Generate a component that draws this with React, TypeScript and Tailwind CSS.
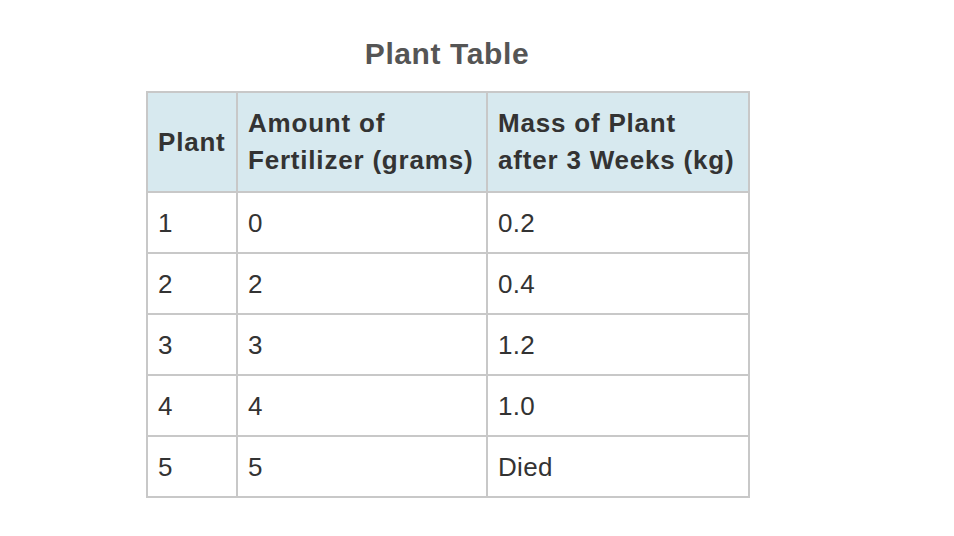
import React from "react";

const rows = [
  { plant: "1", fert: "0", mass: "0.2" },
  { plant: "2", fert: "2", mass: "0.4" },
  { plant: "3", fert: "3", mass: "1.2" },
  { plant: "4", fert: "4", mass: "1.0" },
  { plant: "5", fert: "5", mass: "Died" },
];

export default function App() {
  return (
    <div
      className="w-[954px] h-[536px] bg-white pl-[146px] pt-[37px]"
      style={{ fontFamily: '"Liberation Sans", Arial, sans-serif' }}
    >
      <div className="w-[602px] flex flex-col">
        {/* Title */}
        <h1 className="text-center text-[30px] leading-[34px] font-bold tracking-[0.6px] text-[#555555]">
          Plant Table
        </h1>

        {/* Table */}
        <table className="mt-[20px] w-[602px] table-fixed border-collapse text-[#333333]">
          <colgroup>
            <col className="w-[90px]" />
            <col className="w-[250px]" />
            <col className="w-[262px]" />
          </colgroup>
          <thead>
            <tr className="bg-[#d7e9ef]">
              {["Plant", "Amount of Fertilizer (grams)", "Mass of Plant after 3 Weeks (kg)"].map((h, i) => (
                <th
                  key={i}
                  className="h-[100px] border-2 border-[#c8c8c8] px-[10px] text-left align-middle text-[26px] leading-[37px] font-bold tracking-[0.8px]"
                >
                  {i === 1 ? (
                    <>
                      Amount of
                      <br />
                      Fertilizer (grams)
                    </>
                  ) : i === 2 ? (
                    <>
                      Mass of Plant
                      <br />
                      after 3 Weeks (kg)
                    </>
                  ) : (
                    h
                  )}
                </th>
              ))}
            </tr>
          </thead>
          <tbody>
            {rows.map((r) => (
              <tr key={r.plant}>
                <td className="h-[61px] border-2 border-[#c8c8c8] px-[10px] align-middle text-[26px] leading-[30px] tracking-[0.3px]">
                  {r.plant}
                </td>
                <td className="h-[61px] border-2 border-[#c8c8c8] px-[10px] align-middle text-[26px] leading-[30px] tracking-[0.3px]">
                  {r.fert}
                </td>
                <td className="h-[61px] border-2 border-[#c8c8c8] px-[10px] align-middle text-[26px] leading-[30px] tracking-[0.3px]">
                  {r.mass}
                </td>
              </tr>
            ))}
          </tbody>
        </table>
      </div>
    </div>
  );
}
